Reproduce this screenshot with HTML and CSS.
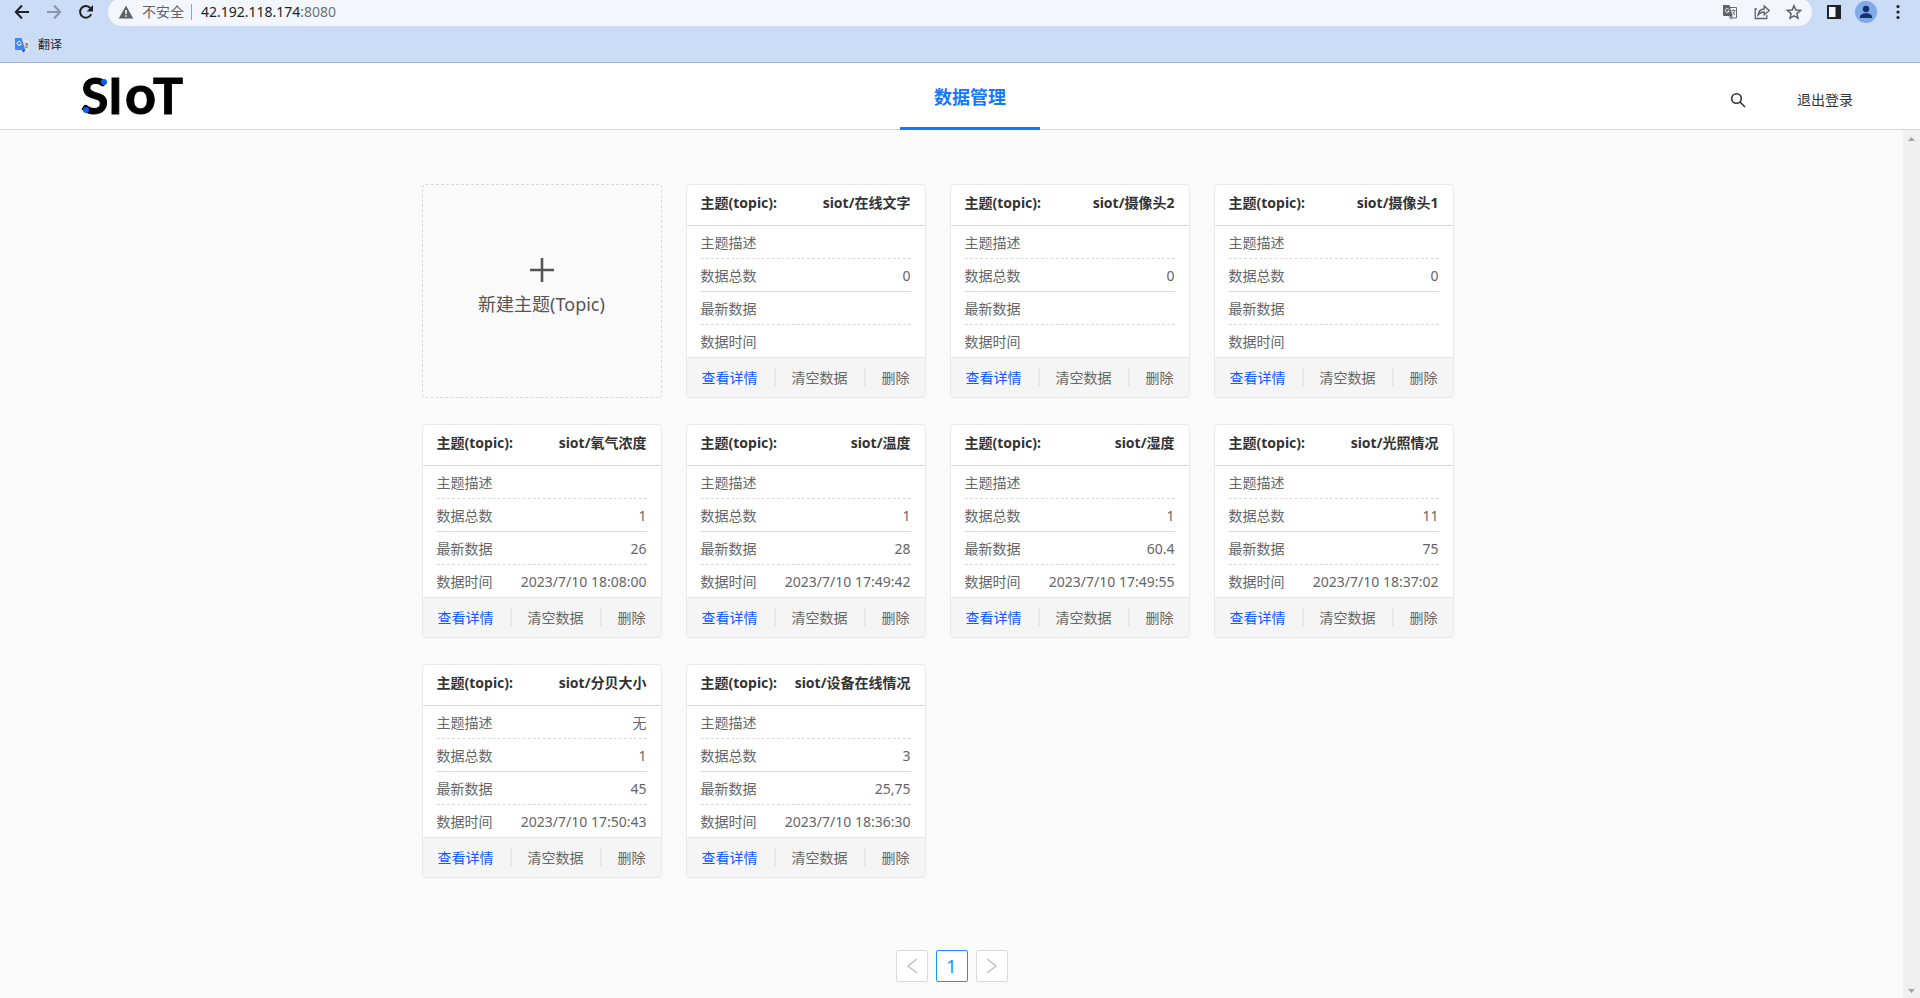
FILE: index.html
```html
<!DOCTYPE html>
<html lang="zh-CN">
<head>
    <meta charset="UTF-8">
    <meta name="viewport" content="width=device-width, initial-scale=1.0">
    <title>SIoT</title>
    <link rel="stylesheet" href="styles.css">
</head>
<body>

    <div class="browser">
        <div class="toolbar">
            <button class="nav-btn" aria-label="后退">
                <svg width="16" height="16" viewBox="0 0 16 16" fill="none" stroke="#202124" stroke-width="2"><path d="M15 8H2.5M8 1.5L1.8 8L8 14.5"/></svg>
            </button>
            <button class="nav-btn" aria-label="前进">
                <svg width="16" height="16" viewBox="0 0 16 16" fill="none" stroke="#8a94a8" stroke-width="2"><path d="M1 8h12.5M8 1.5L14.2 8L8 14.5"/></svg>
            </button>
            <button class="nav-btn" aria-label="刷新">
                <svg width="16" height="16" viewBox="0 0 16 16"><path d="M13.2 10.2A5.8 5.8 0 1 1 12.4 4.2" fill="none" stroke="#202124" stroke-width="2"/><path d="M15 1v6.4H8.6z" fill="#202124"/></svg>
            </button>
            <div class="address">
                <svg width="16" height="16" viewBox="0 0 16 16"><path d="M8 1.5L15.3 14.500H.7z" fill="#5f6368"/><path d="M8 6v4M8 11.200v1.600" stroke="#f3f7fd" stroke-width="1.600"/></svg>
                <span class="unsafe">不安全</span>
                <span class="host">42.192.118.174<span class="port">:8080</span></span>
                <div class="address-icons">
                    <button aria-label="翻译此页">
                        <svg width="16" height="16" viewBox="0 0 16 16"><path d="M6 3.500h8.500v10.500H9" fill="none" stroke="#6b6f75"/><path d="M1 1h6.500l3 11H2a1 1 0 0 1-1-1z" fill="#5f6368"/><path d="M7 5.500A2 2 0 1 0 7.200 7H5.500" fill="none" stroke="#f3f7fd"/><path d="M9.500 6.500h4M11.500 5.500v1M12.800 6.500c-.3 2-1.300 3.200-2.300 4M10.500 8l2.500 3M7.500 12l1 3 2-3z" fill="none" stroke="#6b6f75"/></svg>
                    </button>
                    <button aria-label="分享">
                        <svg width="16" height="16" viewBox="0 0 16 16" fill="none" stroke="#5f6368" stroke-width="1.300"><path d="M3 5H1.200v9.500h11.600V11"/><path d="M4 11C4.500 7 7 5.200 10.200 5V2l5 4.500-5 4.300V8C7.500 8 5.500 9 4 11z"/></svg>
                    </button>
                    <button aria-label="收藏">
                        <svg width="16" height="16" viewBox="0 0 16 16" fill="none" stroke="#5f6368" stroke-width="1.500"><path d="M8 1.800l1.800 4.300 4.700.4-3.600 3.100 1.100 4.600L8 11.800l-4 2.400 1.100-4.600-3.600-3.100 4.700-.4z"/></svg>
                    </button>
                </div>
            </div>
            <button class="nav-btn" aria-label="侧边栏">
                <svg width="16" height="16" viewBox="0 0 16 16"><path d="M1 1h14v14H1z" fill="#202124"/><path d="M3 3h6.500v10H3z" fill="#f3f7fd"/></svg>
            </button>
            <button class="avatar" aria-label="用户">
                <svg width="22" height="22" viewBox="0 0 22 22"><circle cx="11" cy="11" r="11" fill="#81a9e8"/><circle cx="11" cy="8" r="3.200" fill="#14316a"/><path d="M5 17v-1.500c0-2 3-3.300 6-3.300s6 1.300 6 3.300V17z" fill="#14316a"/></svg>
            </button>
            <button class="nav-btn" aria-label="菜单">
                <svg width="16" height="16" viewBox="0 0 16 16" fill="#202124"><circle cx="8" cy="2.500" r="1.600"/><circle cx="8" cy="8" r="1.600"/><circle cx="8" cy="13.500" r="1.600"/></svg>
            </button>
        </div>
        <div class="bookmarks">
            <a href="#">
                <svg width="16" height="16" viewBox="0 0 16 16"><path d="M6 3h9v12H8z" fill="#dfe3ea"/><path d="M1 1h6.500l4 12H2a1 1 0 0 1-1-1z" fill="#4285f4"/><path d="M7 5.300A2 2 0 1 0 7.200 7H5.600" fill="none" stroke="#fff"/><path d="M7.500 13h4L9.500 15.500z" fill="#1f4fc0"/><path d="M11 7h3M12.500 6v1M13.500 7c-.3 2-1 3-2 4M11.500 8.500l2 2.500" fill="none" stroke="#6b7480"/></svg>
                翻译
            </a>
        </div>
    </div>

    <header class="header">
        <a class="logo" href="#" aria-label="SIoT">
            <svg width="104" height="66" viewBox="0 0 104 66">
                <text y="51" x="-1 26 43 71"><tspan>SI</tspan><tspan class="logo-o">o</tspan><tspan>T</tspan></text>
                <circle cx="22" cy="19" r="3" fill="#0a5cff"/>
                <circle cx="4" cy="47" r="3" fill="#0a5cff"/>
            </svg>
        </a>
        <nav class="tabs">
            <a href="#">数据管理</a>
        </nav>
        <div class="actions">
            <button aria-label="搜索">
                <svg width="16" height="16" viewBox="0 0 16 16" fill="none" stroke="#333" stroke-width="1.600"><circle cx="6.500" cy="6.500" r="4.800"/><path d="M10 10l5 5"/></svg>
            </button>
            <button>退出登录</button>
        </div>
    </header>

    <div class="page">
        <main class="content">
            <div class="topics" id="topics">
                <button class="add-card">
                    <svg width="24" height="24" viewBox="0 0 24 24" stroke="#555" stroke-width="2.600"><path d="M12 0v24M0 12h24"/></svg>
                    新建主题(Topic)
                </button>
            </div>
            <nav class="pagination" aria-label="分页">
                <button aria-label="上一页"><svg width="14" height="16" viewBox="0 0 14 16"><path d="M12 1L3 8l9 7"/></svg></button>
                <button class="current">1</button>
                <button aria-label="下一页"><svg width="14" height="16" viewBox="0 0 14 16"><path d="M2 1l9 7-9 7"/></svg></button>
            </nav>
        </main>
        <div class="scrollbar">
            <svg width="7" height="4" viewBox="0 0 7 4"><path d="M0 4L3.500 0L7 4z" fill="#a3a3a3"/></svg>
            <svg width="7" height="4" viewBox="0 0 7 4"><path d="M0 0h7L3.500 4z" fill="#a3a3a3"/></svg>
        </div>
    </div>

    <script>
    const topics = [
        { name: 'siot/在线文字', desc: '', total: 0, latest: '', time: '' },
        { name: 'siot/摄像头2', desc: '', total: 0, latest: '', time: '' },
        { name: 'siot/摄像头1', desc: '', total: 0, latest: '', time: '' },
        { name: 'siot/氧气浓度', desc: '', total: 1, latest: '26', time: '2023/7/10 18:08:00' },
        { name: 'siot/温度', desc: '', total: 1, latest: '28', time: '2023/7/10 17:49:42' },
        { name: 'siot/湿度', desc: '', total: 1, latest: '60.4', time: '2023/7/10 17:49:55' },
        { name: 'siot/光照情况', desc: '', total: 11, latest: '75', time: '2023/7/10 18:37:02' },
        { name: 'siot/分贝大小', desc: '无', total: 1, latest: '45', time: '2023/7/10 17:50:43' },
        { name: 'siot/设备在线情况', desc: '', total: 3, latest: '25,75', time: '2023/7/10 18:36:30' }
    ];

    const list = document.getElementById('topics');

    topics.forEach(item => {
        const card = document.createElement('section');
        card.className = 'card';
        card.innerHTML = `
            <h2><span>主题(topic):</span><span>${item.name}</span></h2>
            <dl>
                <div><dt>主题描述</dt><dd>${item.desc}</dd></div>
                <div class="solid"><dt>数据总数</dt><dd>${item.total}</dd></div>
                <div><dt>最新数据</dt><dd>${item.latest}</dd></div>
                <div><dt>数据时间</dt><dd>${item.time}</dd></div>
            </dl>
            <div class="card-footer">
                <button class="detail">查看详情</button>
                <i></i>
                <button>清空数据</button>
                <i></i>
                <button>删除</button>
            </div>
        `;
        list.appendChild(card);
    });
    </script>

</body>
</html>
```
FILE: styles.css
```css
* {
    box-sizing: border-box;
}

body {
    margin: 0;
    min-height: 100vh;
    display: flex;
    flex-direction: column;
    font-family: "Noto Sans", "Noto Sans CJK SC", sans-serif;
    font-size: 14px;
    line-height: 20px;
    color: #333;
    background-color: #fafafa;
}

button {
    padding: 0;
    border: none;
    background: none;
    font: inherit;
    color: inherit;
    cursor: pointer;
}

a {
    color: inherit;
    text-decoration: none;
}

svg {
    display: block;
    flex-shrink: 0;
}

/* browser bar */
.browser {
    height: 63px;
    background-color: #cbdcf6;
    border-bottom: 1px solid #a2b3d3;
    overflow: hidden;
}

.toolbar {
    display: flex;
    align-items: center;
    gap: 16px;
    height: 28px;
    margin-top: -2px;
    padding: 0 14px;
}

.address {
    flex: 1;
    display: flex;
    align-items: center;
    height: 28px;
    padding: 0 10px;
    margin: 0 -2px;
    border-radius: 14px;
    background-color: #f3f7fd;
}

.unsafe {
    margin-left: 8px;
    padding-right: 7px;
    line-height: 16px;
    color: #5f6368;
    border-right: 1px solid #9aa0a6;
}

.host {
    margin-left: 9px;
    color: #202124;
}

.port {
    color: #6b6f75;
}

.address-icons {
    display: flex;
    gap: 16px;
    margin-left: auto;
}

.avatar {
    margin: 0 -3px;
}

.bookmarks {
    padding: 9px 14px 8px;
    font-size: 12px;
    color: #202124;
}

.bookmarks a {
    display: flex;
    align-items: center;
    gap: 8px;
}

/* header */
.header {
    display: grid;
    grid-template-columns: 1fr 140px 1fr;
    height: 67px;
    padding: 0 62px 0 82px;
    background-color: #fff;
    border-bottom: 1px solid #d9d9d9;
}

.logo svg {
    overflow: visible;
}

.logo text {
    font-family: Lato, sans-serif;
    font-size: 50px;
    font-weight: bold;
    stroke: #000;
    stroke-width: 1px;
}

.logo .logo-o {
    font-size: 54px;
}

.tabs a {
    display: block;
    height: 67px;
    padding-top: 18px;
    border-bottom: 3px solid #1677ff;
    font-size: 18px;
    font-weight: bold;
    line-height: 32px;
    text-align: center;
    color: #1677ff;
}

.actions {
    display: flex;
    justify-content: flex-end;
    align-items: center;
    gap: 51px;
    padding: 6px 5px 0 0;
}

/* page */
.page {
    flex: 1;
    display: flex;
}

.content {
    flex: 1;
    padding: 54px 24px 16px;
}

.topics {
    display: grid;
    grid-template-columns: repeat(auto-fill, 240px);
    gap: 26px 24px;
    max-width: 1060px;
    margin: 0 auto;
}

.add-card {
    display: flex;
    flex-direction: column;
    align-items: center;
    justify-content: center;
    gap: 10px;
    padding-bottom: 8px;
    border: 1px dashed #d9d9d9;
    border-radius: 4px;
    font-size: 18px;
    line-height: 24px;
    color: #555;
}

.card {
    border: 1px solid #e8e8e8;
    border-radius: 4px;
    background-color: #fff;
    overflow: hidden;
}

.card h2 {
    display: flex;
    justify-content: space-between;
    height: 41px;
    margin: 0;
    padding: 8px 14px 0;
    border-bottom: 1px solid #d9d9d9;
    font-size: 14px;
    white-space: nowrap;
}

.card dl {
    margin: 0;
    padding: 0 14px;
    color: #666;
}

.card dl div {
    display: flex;
    justify-content: space-between;
    height: 33px;
    border-bottom: 1px dashed #d9d9d9;
    line-height: 34px;
}

.card dl .solid {
    border-bottom-style: solid;
}

.card dl div:last-child {
    height: 32px;
    border-bottom: none;
}

.card dd {
    margin: 0;
}

.card-footer {
    display: flex;
    justify-content: space-between;
    align-items: center;
    height: 40px;
    padding: 0 15px;
    border-top: 1px solid #e8e8e8;
    background-color: #f5f5f5;
    color: #666;
}

.card-footer i {
    width: 2px;
    height: 19px;
    background-color: #e8e8ea;
}

.card-footer .detail {
    color: #0a5cff;
}

.pagination {
    display: flex;
    justify-content: center;
    gap: 8px;
    margin-top: 72px;
}

.pagination button {
    display: flex;
    align-items: center;
    justify-content: center;
    width: 32px;
    height: 32px;
    border: 1px solid #d9d9d9;
    border-radius: 2px;
    background-color: #fff;
    font-size: 18px;
}

.pagination path {
    fill: none;
    stroke: #bfbfbf;
    stroke-width: 1.5;
}

.pagination .current {
    border-color: #1890ff;
    color: #1890ff;
}

.scrollbar {
    display: flex;
    flex-direction: column;
    justify-content: space-between;
    align-items: center;
    width: 17px;
    padding: 7px 0 5px;
    background-color: #f0f0f0;
}
```
